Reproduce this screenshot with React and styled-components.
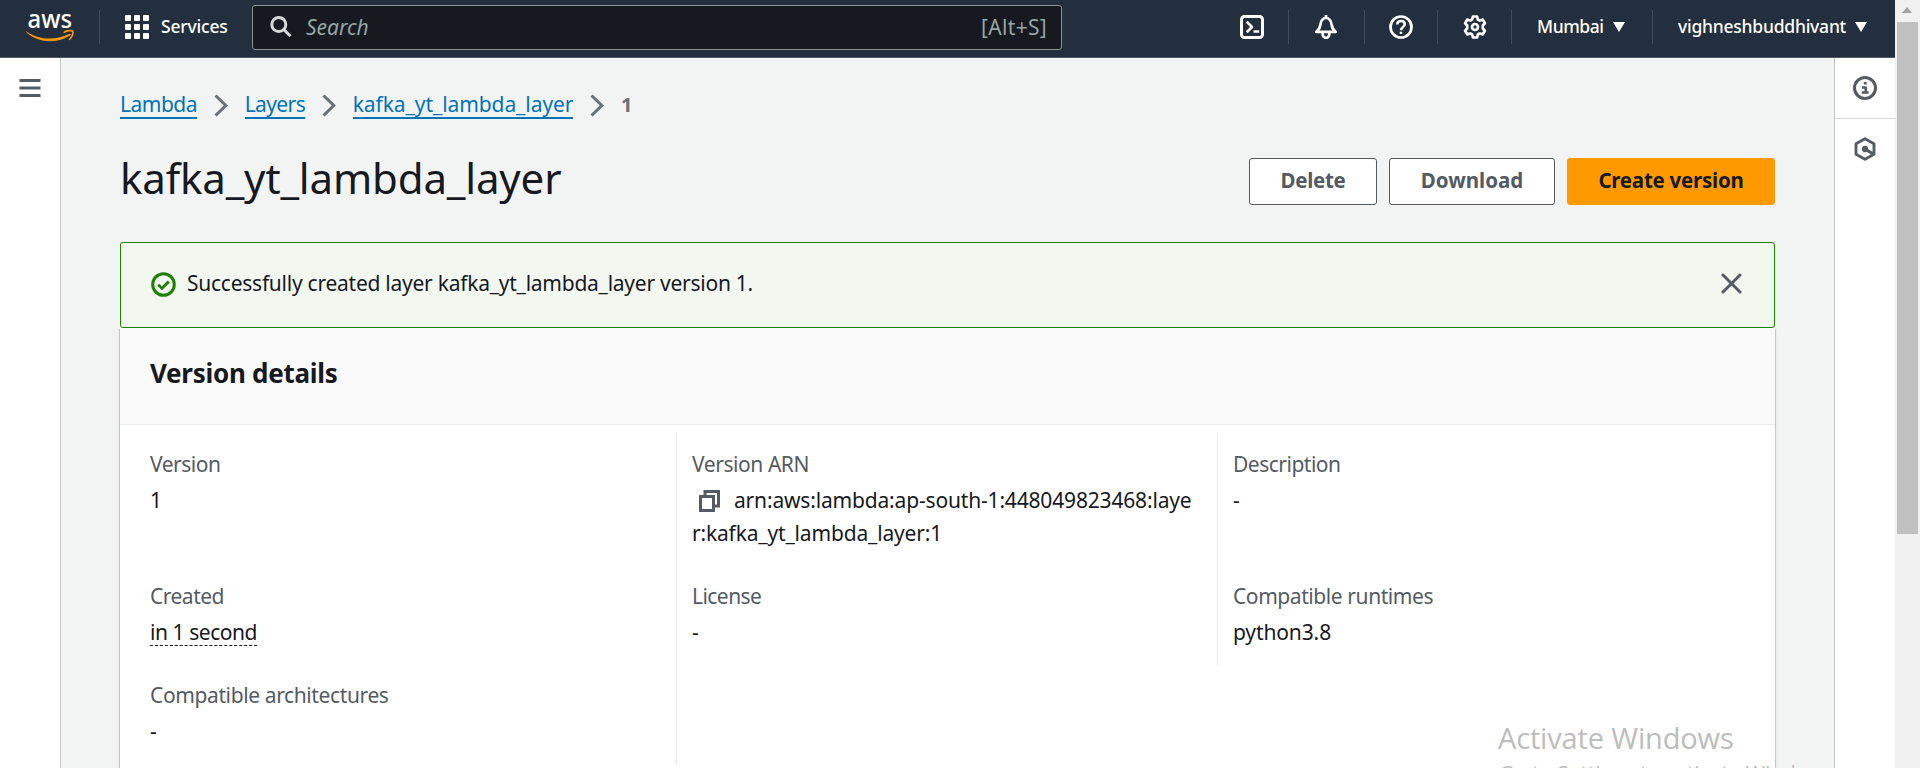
import React from 'react';
import styled, { createGlobalStyle } from 'styled-components';

const Global = createGlobalStyle`
  * { box-sizing: border-box; }
  body { margin: 0; background: #f2f3f3; overflow: hidden; }
`;

const Screen = styled.div`
  display: flex;
  position: relative;
  width: 1920px;
  height: 768px;
  overflow: hidden;
  font-family: 'Noto Sans', 'Open Sans', sans-serif;
  font-size: 21px;
  color: #16191f;
`;

const Page = styled.div`
  display: flex;
  flex-direction: column;
  width: 1895px;
  height: 768px;
`;

const Label = styled.span`
  padding-bottom: ${(p) => p.$lift || 0}px;
  letter-spacing: ${(p) => p.$ls || 0}px;
  white-space: nowrap;
`;

/* ---------- top navigation ---------- */
const TopNav = styled.header`
  display: flex;
  align-items: center;
  flex: none;
  height: 58px;
  padding: 0 0 3px 26px;
  background: #232f3e;
  border-bottom: 1px solid #545b64;
  color: #fff;
  font-size: 17.5px;
  font-weight: 500;
`;

const LogoSlot = styled.div`
  display: flex;
  align-items: center;
  width: 74px;
  height: 34px;
  border-right: 1px solid #414d5c;
`;

const ServicesButton = styled.div`
  display: flex;
  align-items: center;
  gap: 12px;
  width: 152px;
  padding-left: 25px;
`;

const SearchBox = styled.div`
  display: flex;
  align-items: center;
  width: 810px;
  height: 45px;
  padding: 0 14px 0 17px;
  background: #161a20;
  border: 1px solid #879596;
  border-radius: 3px;
  color: #95a5a6;
  font-size: 21px;
  font-weight: 400;
`;

const Placeholder = styled.span`
  flex: 1;
  margin-left: 14px;
  font-style: italic;
`;

const Utilities = styled.nav`
  display: flex;
  align-items: center;
  margin-left: auto;
`;

const Utility = styled.div`
  display: flex;
  align-items: center;
  gap: 9px;
  width: ${(p) => p.$w}px;
  height: 34px;
  padding-left: ${(p) => p.$inset || 25}px;
  border-right: ${(p) => (p.$last ? 'none' : '1px solid #414d5c')};
`;

/* ---------- page frame ---------- */
const Body = styled.div`
  display: flex;
  flex: 1;
  min-height: 0;
`;

const LeftRail = styled.aside`
  display: flex;
  align-items: flex-start;
  width: 61px;
  padding: 21px 0 0 19px;
  background: #fff;
  border-right: 1px solid #c4c9ca;
`;

const RightRail = styled.aside`
  width: 61px;
  background: #fff;
  border-left: 1px solid #bfc6c8;
`;

const RailItem = styled.div`
  display: flex;
  justify-content: center;
  height: 61px;
  padding-top: 18px;
  border-bottom: ${(p) => (p.$divided ? '1px solid #d5dbdb' : 'none')};
`;

const Content = styled.main`
  flex: 1;
  padding: 32px 59px 0 59px;
  background: #f2f3f3;
`;

/* ---------- heading ---------- */
const Breadcrumbs = styled.nav`
  display: flex;
  height: 29px;
  line-height: 29px;
`;

const Crumb = styled.a`
  height: 29px;
  color: #0073bb;
  border-bottom: 2px solid #0073bb;
  letter-spacing: ${(p) => p.$ls}px;
`;

const CrumbCurrent = styled.span`
  color: #687078;
  font-size: 20px;
  font-weight: 700;
`;

const Chevron = styled.svg`
  width: 14px;
  height: 23px;
  margin: 4px 17px 0 16.6px;
  fill: none;
  stroke: #687078;
  stroke-width: 3;
`;

const TitleRow = styled.div`
  display: flex;
  justify-content: space-between;
  align-items: flex-start;
  height: 53px;
  margin: 33px 0 37px;
`;

const Title = styled.h1`
  margin: 0;
  font-size: 42px;
  font-weight: 400;
  line-height: 52px;
  letter-spacing: -0.16px;
`;

const Actions = styled.div`
  display: flex;
  gap: 12px;
  margin-top: 6px;
`;

const Button = styled.button`
  width: ${(p) => p.$w}px;
  height: 47px;
  padding: 0 0 4px;
  border: 1px solid ${(p) => (p.$primary ? '#ff9900' : '#545b64')};
  border-radius: 3px;
  background: ${(p) => (p.$primary ? '#ff9900' : '#fff')};
  color: ${(p) => (p.$primary ? '#16191f' : '#545b64')};
  font: 700 20.5px 'Noto Sans', sans-serif;
  letter-spacing: ${(p) => p.$ls}px;
`;

/* ---------- success message ---------- */
const Alert = styled.div`
  display: flex;
  align-items: flex-start;
  height: 86px;
  padding: 0 32px 0 30px;
  background: #f2f7f0;
  border: 1px solid #1d8102;
  border-radius: 3px;
`;

const AlertIcon = styled.svg`
  width: 25px;
  height: 25px;
  margin: 29px 11px 0 0;
  fill: none;
  stroke: #1d8102;
`;

const AlertText = styled.p`
  flex: 1;
  margin: 24px 0 0;
  line-height: 33px;
  letter-spacing: -0.25px;
`;

const CloseIcon = styled.svg`
  width: 21px;
  height: 21px;
  margin-top: 30px;
  stroke: #545b64;
  stroke-width: 3;
  stroke-linecap: round;
`;

/* ---------- details card ---------- */
const Card = styled.section`
  height: 460px;
  background: #fff;
  box-shadow: 0 1px 1px 0 rgba(0, 28, 36, 0.3), 1px 1px 1px 0 rgba(0, 28, 36, 0.15),
    -1px 1px 1px 0 rgba(0, 28, 36, 0.15);
`;

const CardHeader = styled.h2`
  height: 97px;
  margin: 0;
  padding: 25px 30px 0;
  background: #fafafa;
  border-bottom: 1px solid #eaeded;
  font-size: 26px;
  font-weight: 700;
  line-height: 40px;
  letter-spacing: -0.28px;
`;

const Grid = styled.div`
  display: grid;
  grid-template-columns: 557px 541px 1fr;
  padding-top: 9px;
`;

const Cell = styled.div`
  display: flex;
  flex-direction: column;
  align-items: flex-start;
  gap: 3px;
  padding: 14px 20px 16px ${(p) => (p.$col === 0 ? 30 : 15)}px;
  border-right: ${(p) => (p.$col === 2 ? 'none' : '1px solid #eaeded')};
  line-height: 33px;
`;

const Key = styled.div`
  color: #545b64;
  letter-spacing: ${(p) => p.$ls}px;
`;

const Value = styled.div`
  word-break: break-all;
  letter-spacing: ${(p) => p.$ls || 0}px;
`;

const RelativeTime = styled.div`
  height: 30px;
  border-bottom: 1px dashed #16191f;
  letter-spacing: -0.44px;
`;

const CopyIcon = styled.svg`
  width: 21px;
  height: 22px;
  margin: 0 14px 0 7px;
  vertical-align: -4px;
  stroke: #545b64;
  stroke-width: 3;
  fill: none;
`;

/* ---------- scrollbar and desktop watermark ---------- */
const Scrollbar = styled.div`
  display: flex;
  flex-direction: column;
  width: 25px;
  background: #f1f1f1;
`;

const ScrollArrow = styled.div`
  width: 0;
  height: 0;
  margin: 7px 0 9px 7px;
  border: 5.5px solid transparent;
  border-top: none;
  border-bottom: 6px solid #a3a3a3;
`;

const ScrollThumb = styled.div`
  width: 21px;
  height: 512px;
  margin-left: 2px;
  background: #c1c1c1;
`;

const Watermark = styled.div`
  position: absolute;
  left: 1498px;
  top: 718px;
  color: #bdbdbd;
  font-family: 'Open Sans', sans-serif;
  white-space: nowrap;
`;

const WatermarkTitle = styled.div`
  font-size: 29px;
  line-height: 40px;
  letter-spacing: -0.15px;
`;

const WatermarkText = styled.div`
  padding-left: 1px;
  font-size: 20.8px;
  line-height: 29px;
`;

const NavIcon = ({ children, color = '#fff' }) => (
  <svg width="24" height="24" viewBox="0 0 16 16" fill="none" stroke={color} strokeWidth="2" strokeLinejoin="round">
    {children}
  </svg>
);

const Caret = () => (
  <svg width="12" height="10" viewBox="0 0 12 10">
    <path d="M0 0h12L6 10z" fill="#fff" />
  </svg>
);

const AwsLogo = () => (
  <svg width="48" height="34" viewBox="0 0 48 34" overflow="visible">
    <text x="1.5" y="17.500" fill="#fff" fontFamily="Noto Sans" fontWeight="500" fontSize="26" textLength="44.500" lengthAdjust="spacingAndGlyphs">
      aws
    </text>
    <path d="M0.5 21.5C12 30 30 31 43.5 23.8C44.600 23.300 45.300 24.300 44.300 25C34 33.200 13 34.200 0.300 22.300C-.2 21.700 0 21.200 .5 21.500Z" fill="#ff9900" />
    <path d="M38.500 22.300C41 20.300 46.500 20.300 47.200 21.200C47.900 22.300 46.700 27.300 43.800 29.300" fill="none" stroke="#ff9900" strokeWidth="1.6" strokeLinecap="round" strokeLinejoin="round" transform="translate(-.4 0)" />
  </svg>
);

const AppGrid = () => (
  <svg width="24" height="24" viewBox="0 0 24 24" fill="#fff">
    {[0, 9, 18].map((y) => [0, 9, 18].map((x) => <rect key={x + '-' + y} x={x} y={y} width="6" height="6" rx="1" />))}
  </svg>
);

const SearchIcon = () => (
  <svg width="22" height="22" viewBox="0 0 22 22" fill="none" stroke="#d5dbdb" strokeWidth="3">
    <circle cx="8.800" cy="8.500" r="7" />
    <path d="M13.800 13.500l6.700 6.700" />
  </svg>
);

const Separator = () => (
  <Chevron viewBox="0 0 14 23">
    <path d="M1.500 1.500l10.300 10-10.300 10" />
  </Chevron>
);

const details = [
  { key: 'Version', ls: -0.5, value: '1' },
  { key: 'Version ARN', ls: -0.43, value: 'arn:aws:lambda:ap-south-1:448049823468:layer:kafka_yt_lambda_layer:1', vls: -0.17, copy: true },
  { key: 'Description', ls: -0.5, value: '-' },
  { key: 'Created', ls: -0.5, value: 'in 1 second', time: true },
  { key: 'License', ls: -0.55, value: '-' },
  { key: 'Compatible runtimes', ls: -0.42, value: 'python3.8', vls: -0.12 },
  { key: 'Compatible architectures', ls: -0.38, value: '-' },
];

export default function App() {
  return (
    <Screen>
      <Global />
      <Page>
        <TopNav>
          <LogoSlot><AwsLogo /></LogoSlot>
          <ServicesButton>
            <AppGrid />
            <Label $ls={-0.2} $lift={2}>Services</Label>
          </ServicesButton>
          <SearchBox>
            <SearchIcon />
            <Placeholder>Search</Placeholder>
            <Label $ls={0.3}>[Alt+S]</Label>
          </SearchBox>
          <Utilities>
            <Utility $w={74}>
              <NavIcon>
                <rect x="1" y="1" width="14" height="14" rx="2" />
                <path d="M4.500 4.500L8 8l-3.500 3.500M9 11h3.800" strokeWidth="1.700" />
              </NavIcon>
            </Utility>
            <Utility $w={76}>
              <NavIcon>
                <path d="M8 0v2M1.500 11.200h13c-2-1.400-2.500-3-2.700-4.500C11.400 3.700 10 2 8 2S4.600 3.700 4.200 6.700C4 8.200 3.500 9.800 1.500 11.200z" strokeWidth="1.800" />
                <path d="M5.800 12v1a2.200 2.200 0 0 0 4.400 0v-1" strokeWidth="1.800" />
              </NavIcon>
            </Utility>
            <Utility $w={73} $inset={24}>
              <NavIcon>
                <circle cx="8" cy="8" r="7" strokeWidth="1.800" />
                <path d="M5.500 6.400C5.500 4.900 6.500 4 8 4s2.500.9 2.500 2.200C10.500 8 8 7.900 8 10.100M8 11.200v1.500" strokeWidth="1.700" />
              </NavIcon>
            </Utility>
            <Utility $w={74}>
              <NavIcon>
                <path d="M6.600 1h2.800l.5 2 1.300.7 2-.6 1.400 2.400L13.200 7v2l1.400 1.500-1.400 2.400-2-.6-1.300.7-.5 2H6.600l-.5-2-1.300-.7-2 .6-1.400-2.400L2.800 9V7L1.400 5.500l1.400-2.400 2 .6L6.100 3z" strokeWidth="1.800" />
                <circle cx="8" cy="8" r="2" strokeWidth="1.800" />
              </NavIcon>
            </Utility>
            <Utility $w={141}>
              <Label $ls={-0.42} $lift={2}>Mumbai</Label>
              <Caret />
            </Utility>
            <Utility $w={242} $last>
              <Label $ls={-0.24} $lift={2}>vighneshbuddhivant</Label>
              <Caret />
            </Utility>
          </Utilities>
        </TopNav>
        <Body>
          <LeftRail>
            <svg width="22" height="18" viewBox="0 0 22 18" fill="#545b64">
              <rect y="0" x=".5" width="21" height="3" />
              <rect y="7.500" x=".5" width="21" height="3" />
              <rect y="15" x=".5" width="21" height="3" />
            </svg>
          </LeftRail>
          <Content>
            <Breadcrumbs>
              <Crumb $ls={-0.5}>Lambda</Crumb>
              <Separator />
              <Crumb $ls={-0.6}>Layers</Crumb>
              <Separator />
              <Crumb $ls={-0.08}>kafka_yt_lambda_layer</Crumb>
              <Separator />
              <CrumbCurrent>1</CrumbCurrent>
            </Breadcrumbs>
            <TitleRow>
              <Title>kafka_yt_lambda_layer</Title>
              <Actions>
                <Button $w={128} $ls={-0.3}>Delete</Button>
                <Button $w={166} $ls={0}>Download</Button>
                <Button $w={208} $ls={-0.25} $primary>Create version</Button>
              </Actions>
            </TitleRow>
            <Alert>
              <AlertIcon viewBox="0 0 25 25">
                <circle cx="12.500" cy="12.500" r="10.800" strokeWidth="3" />
                <path d="M7.200 12.700l3.800 3.600 6.800-6.800" strokeWidth="2.800" />
              </AlertIcon>
              <AlertText>Successfully created layer kafka_yt_lambda_layer version 1.</AlertText>
              <CloseIcon viewBox="0 0 21 21">
                <path d="M2 2l17 17M19 2L2 19" />
              </CloseIcon>
            </Alert>
            <Card>
              <CardHeader>Version details</CardHeader>
              <Grid>
                {details.map((d, i) => (
                  <Cell key={d.key} $col={i % 3}>
                    <Key $ls={d.ls}>{d.key}</Key>
                    {d.time ? (
                      <RelativeTime>{d.value}</RelativeTime>
                    ) : (
                      <Value $ls={d.vls}>
                        {d.copy && (
                          <CopyIcon viewBox="0 0 21 22">
                            <rect x="1.500" y="6.500" width="13" height="14" />
                            <path d="M6 6V1.500h13.500V16H15" />
                          </CopyIcon>
                        )}
                        {d.value}
                      </Value>
                    )}
                  </Cell>
                ))}
              </Grid>
            </Card>
          </Content>
          <RightRail>
            <RailItem $divided>
              <NavIcon color="#545b64">
                <circle cx="8" cy="8" r="7" />
                <path d="M7.200 4.800h1.900M6 7.700h2.500v3M5.800 11h4.600" strokeWidth="1.700" />
              </NavIcon>
            </RailItem>
            <RailItem>
              <NavIcon color="#545b64">
                <path d="M8 1.200l6 3.300v7L8 14.800l-6-3.300v-7z" strokeWidth="1.900" />
                <circle cx="8" cy="8" r="2.100" fill="#545b64" stroke="none" />
                <path d="M8 8l5.600 3.400" />
              </NavIcon>
            </RailItem>
          </RightRail>
        </Body>
      </Page>
      <Scrollbar>
        <ScrollArrow />
        <ScrollThumb />
      </Scrollbar>
      <Watermark>
        <WatermarkTitle>Activate Windows</WatermarkTitle>
        <WatermarkText>Go to Settings to activate Windows.</WatermarkText>
      </Watermark>
    </Screen>
  );
}
